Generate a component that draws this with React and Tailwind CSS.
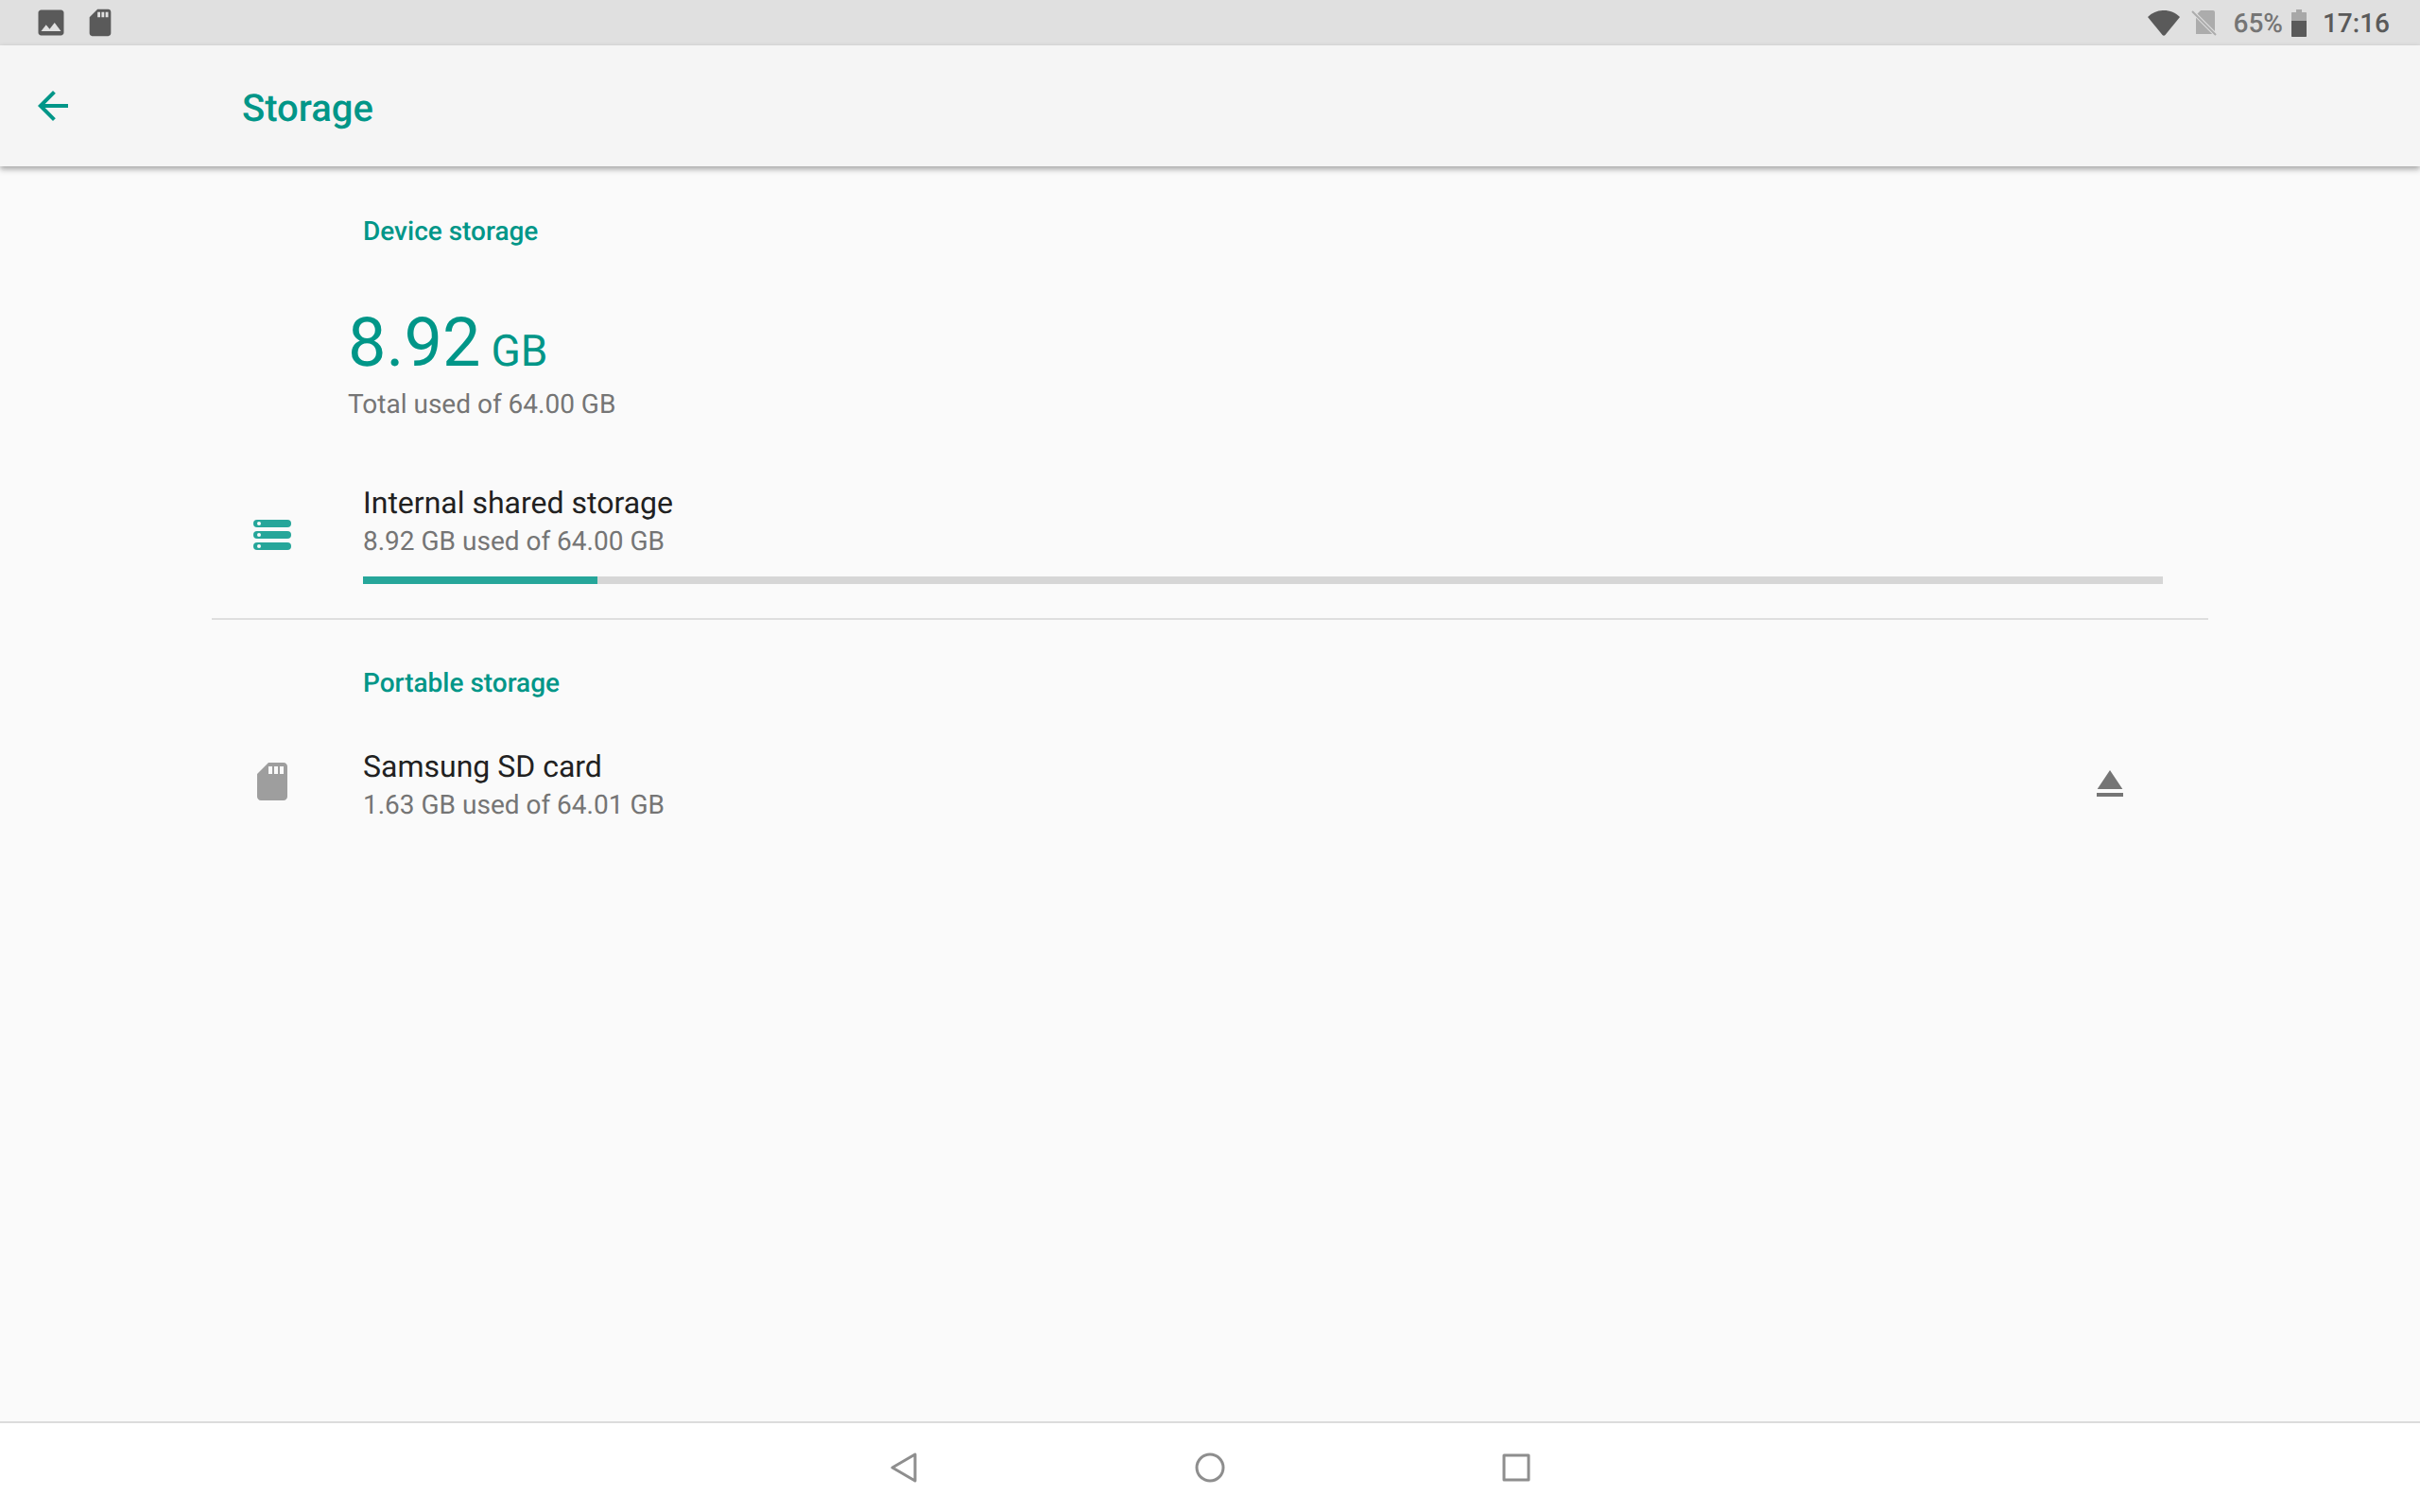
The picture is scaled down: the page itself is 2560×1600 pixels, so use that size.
// App.jsx
import React from 'react';

const App = () => {
  return (
    <div className="h-[1600px] flex flex-col bg-[#fafafa] font-['Roboto',sans-serif] [text-rendering:geometricPrecision] overflow-hidden">
      {/* Status bar */}
      <div className="h-12 shrink-0 bg-[#e0e0e0] flex items-center pl-9 pr-8">
        <svg className="w-9 h-9" viewBox="0 0 24 24" fill="#5a5a5a">
          <path d="M21 19V5c0-1.1-.9-2-2-2H5c-1.1 0-2 .9-2 2v14c0 1.1.9 2 2 2h14c1.1 0 2-.9 2-2zM8.5 13.5l2.5 3.01L14.5 12l4.5 6H5l3.5-4.5z" />
        </svg>
        <svg className="w-[34px] h-[34px] ml-[17px]" viewBox="0 0 24 24" fill="#5a5a5a">
          <path d="M18 2h-8L4.02 8 4 20c0 1.1.9 2 2 2h12c1.1 0 2-.9 2-2V4c0-1.1-.9-2-2-2zm-6 6h-2V4h2v4zm3 0h-2V4h2v4zm3 0h-2V4h2v4z" />
        </svg>
        <div className="flex-1" />
        <svg className="w-[34px] h-[27px]" viewBox="0 0 34 27" fill="#5a5a5a">
          <path d="M0 7C4.5 2.5 10.5 0 17 0s12.5 2.5 17 7L18.5 26c-.8.9-2.2.9-3 0L0 7z" />
        </svg>
        <svg className="w-[28px] h-[28px] ml-3" viewBox="0 0 28 28">
          <path d="M10 1h13c1.1 0 2 .9 2 2v23H5V6l5-5z" fill="#acacac" />
          <path d="M1 2l25 25" stroke="#e0e0e0" strokeWidth="4" />
          <path d="M1 2l25 25" stroke="#acacac" strokeWidth="2" />
        </svg>
        <span className="ml-[17px] pt-[2px] text-[28px] font-medium text-[#757575] leading-none">65%</span>
        <svg className="w-4 h-[29px] ml-[9px]" viewBox="0 0 16 29">
          <path d="M5 0h6v3h4c.6 0 1 .4 1 1v9H0V4c0-.6.4-1 1-1h4V0z" fill="#a8a8a8" />
          <path d="M0 12h16v16c0 .6-.4 1-1 1H1c-.6 0-1-.4-1-1V12z" fill="#5a5a5a" />
        </svg>
        <span className="ml-[17px] pt-[2px] text-[28px] font-medium text-[#5a5a5a] leading-none">17:16</span>
      </div>

      {/* Toolbar */}
      <header className="h-32 shrink-0 bg-[#f5f5f5] flex items-center shadow-[0_3px_6px_rgba(0,0,0,0.35)] z-10">
        <svg className="w-12 h-12 ml-8" viewBox="0 0 24 24" fill="#009688">
          <path d="M20 11H7.83l5.59-5.59L12 4l-8 8 8 8 1.41-1.41L7.83 13H20v-2z" />
        </svg>
        <h1 className="ml-[176px] pt-[6px] text-[40px] font-medium text-[#009688] leading-none">Storage</h1>
      </header>

      {/* Main */}
      <main className="flex-1 mx-[224px] flex flex-col">
        <h2 className="mt-[53px] ml-40 text-[28px] leading-8 font-medium text-[#009688]">Device storage</h2>

        <div className="mt-[66px] ml-36 flex items-baseline text-[#009688] leading-none">
          <span className="text-[72px]">8.92</span>
          <span className="ml-[11px] text-[46px]">GB</span>
        </div>
        <p className="mt-[13px] ml-36 text-[28px] leading-8 text-[#757575]">Total used of 64.00 GB</p>

        {/* Internal storage row */}
        <div className="mt-[64px] flex">
          <div className="w-40 pl-11 pt-[42px] shrink-0">
            <svg className="w-10 h-8" viewBox="0 0 40 32" fill="#26a69a">
              <rect y="0" width="40" height="8" rx="4" />
              <rect y="12" width="40" height="8" rx="4" />
              <rect y="24" width="40" height="8" rx="4" />
              <circle cx="6" cy="4" r="2" fill="#fafafa" />
              <circle cx="6" cy="16" r="2" fill="#fafafa" />
              <circle cx="6" cy="28" r="2" fill="#fafafa" />
            </svg>
          </div>
          <div className="flex-1 mr-[48px]">
            <p className="text-[32px] leading-[48px] text-[#212121]">Internal shared storage</p>
            <p className="mt-[1px] text-[28px] leading-8 text-[#757575]">8.92 GB used of 64.00 GB</p>
            <div className="mt-[21px] h-2 bg-[#d6d6d6]">
              <div className="h-full w-[248px] bg-[#26a69a]" />
            </div>
          </div>
        </div>

        <div className="mt-[36px] h-0.5 bg-[#dedede]" />

        <h2 className="mt-[51px] ml-40 text-[28px] leading-8 font-medium text-[#009688]">Portable storage</h2>

        {/* SD card row */}
        <div className="mt-[48px] flex">
          <div className="w-40 pl-[40px] pt-[16px] shrink-0">
            <svg className="w-12 h-12" viewBox="0 0 24 24" fill="#9e9e9e">
              <path d="M18 2h-8L4.02 8 4 20c0 1.1.9 2 2 2h12c1.1 0 2-.9 2-2V4c0-1.1-.9-2-2-2zm-6 6h-2V4h2v4zm3 0h-2V4h2v4zm3 0h-2V4h2v4z" />
            </svg>
          </div>
          <div className="flex-1">
            <p className="text-[32px] leading-[48px] text-[#212121]">Samsung SD card</p>
            <p className="mt-[1px] text-[28px] leading-8 text-[#757575]">1.63 GB used of 64.01 GB</p>
          </div>
          <svg className="w-12 h-12 mr-[80px] mt-[18px]" viewBox="0 0 24 24" fill="#757575">
            <path d="M5 17h14v2H5zm7-12L5.33 15h13.34z" />
          </svg>
        </div>
      </main>

      {/* Nav bar */}
      <nav className="h-24 shrink-0 bg-white border-t-2 border-[#dcdcdc] flex justify-center items-center">
        <div className="w-[324px] flex justify-center">
          <svg className="w-8 h-8" viewBox="0 0 32 32" fill="none" stroke="#8e8e8e" strokeWidth="3" strokeLinejoin="round">
            <path d="M28 2v28L4 16z" />
          </svg>
        </div>
        <div className="w-[324px] flex justify-center">
          <svg className="w-8 h-8" viewBox="0 0 32 32" fill="none" stroke="#8e8e8e" strokeWidth="3">
            <circle cx="16" cy="16" r="14" />
          </svg>
        </div>
        <div className="w-[324px] flex justify-center">
          <svg className="w-8 h-8" viewBox="0 0 32 32" fill="none" stroke="#8e8e8e" strokeWidth="3" strokeLinejoin="round">
            <rect x="3" y="3" width="26" height="26" />
          </svg>
        </div>
      </nav>
    </div>
  );
};

export default App;
